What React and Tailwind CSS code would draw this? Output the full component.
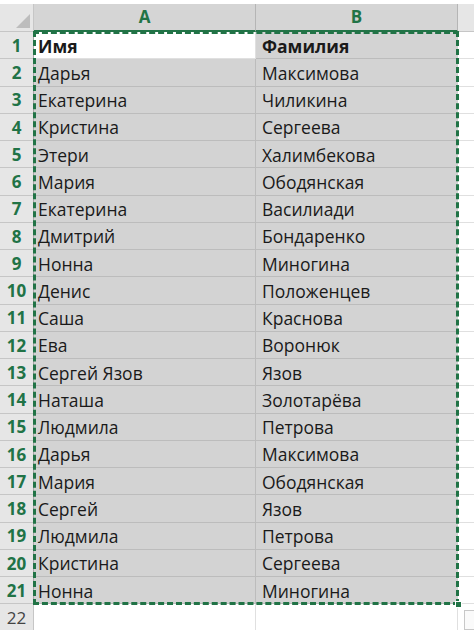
import React from "react";

const rows = [
  ["Имя", "Фамилия"],
  ["Дарья", "Максимова"],
  ["Екатерина", "Чиликина"],
  ["Кристина", "Сергеева"],
  ["Этери", "Халимбекова"],
  ["Мария", "Ободянская"],
  ["Екатерина", "Василиади"],
  ["Дмитрий", "Бондаренко"],
  ["Нонна", "Миногина"],
  ["Денис", "Положенцев"],
  ["Саша", "Краснова"],
  ["Ева", "Воронюк"],
  ["Сергей Язов", "Язов"],
  ["Наташа", "Золотарёва"],
  ["Людмила", "Петрова"],
  ["Дарья", "Максимова"],
  ["Мария", "Ободянская"],
  ["Сергей", "Язов"],
  ["Людмила", "Петрова"],
  ["Кристина", "Сергеева"],
  ["Нонна", "Миногина"],
];

const font = { fontFamily: '"Open Sans", "Liberation Sans", sans-serif' };

function RowNum({ n, active }) {
  return (
    <div
      className={`w-[34px] shrink-0 flex items-center justify-center border-b border-r border-[#c6c6c6] bg-[#e6e6e6] text-[17px] pt-[1px] ${
        active ? "font-bold text-[#217346] border-r-[#a8a8a8]" : "text-[#444]"
      }`}
    >
      {n}
    </div>
  );
}

export default function App() {
  return (
    <div className="w-[474px] h-[630px] overflow-hidden bg-white" style={font}>
      <div className="h-[4px]" />
      {/* column headers */}
      <div className="flex h-[28px]">
        <div className="w-[34px] shrink-0 relative bg-[#e6e6e6] border-r border-b border-[#c6c6c6]">
          <div className="absolute right-[3px] bottom-[3px] w-0 h-0 border-l-[14px] border-l-transparent border-b-[14px] border-b-[#bdbdbd]" />
        </div>
        <div className="w-[222px] shrink-0 flex items-center justify-center bg-[#d5d5d5] border-r border-[#b5b5b5] border-b-2 border-b-[#217346] text-[17px] font-bold text-[#217346]">
          A
        </div>
        <div className="w-[202px] shrink-0 flex items-center justify-center bg-[#d5d5d5] border-r border-[#b5b5b5] border-b-2 border-b-[#217346] text-[17px] font-bold text-[#217346]">
          B
        </div>
        <div className="flex-1 bg-[#e6e6e6] border-b border-[#c6c6c6]" />
      </div>

      <div className="flex">
        <div className="flex flex-col">
          {rows.map((_, i) => (
            <div key={i} className="h-[27.25px] flex">
              <RowNum n={i + 1} active />
            </div>
          ))}
          <div className="h-[27px] flex">
            <RowNum n={22} />
          </div>
        </div>

        <div className="flex flex-col">
          <div className="relative">
            {rows.map(([a, b], i) => (
              <div key={i} className="h-[27.25px] flex text-[17.5px] text-[#1a1a1a]">
                <div
                  className={`w-[222px] shrink-0 flex items-center pl-[4px] pt-[1px] border-b border-r ${
                    i === 0
                      ? "bg-white border-[#e0e0e0] font-bold"
                      : "bg-[#d3d3d3] border-[#bcbcbc]"
                  }`}
                >
                  {a}
                </div>
                <div
                  className={`w-[202px] shrink-0 flex items-center pl-[6px] pt-[1px] border-b border-[#bcbcbc] bg-[#d3d3d3] ${
                    i === 0 ? "font-bold" : ""
                  }`}
                >
                  {b}
                </div>
              </div>
            ))}
            {/* marching ants */}
            <div className="absolute -inset-[1px] border-[3px] border-dashed border-[#217346] pointer-events-none" />
            <div className="absolute -right-[4px] -bottom-[4px] w-[7px] h-[7px] bg-[#217346] border border-white" />
          </div>
          <div className="h-[27px] flex">
            <div className="w-[222px] shrink-0 border-b border-r border-[#e0e0e0]" />
            <div className="w-[202px] shrink-0 border-b border-r border-[#e0e0e0]" />
          </div>
        </div>
        <div className="flex-1 flex flex-col">
          {rows.map((_, i) => (
            <div key={i} className="h-[27.25px] border-b border-[#e0e0e0]" />
          ))}
          <div className="h-[27px] relative">
            <div className="absolute left-[6px] top-[6px] w-[14px] h-[20px] border border-[#c8c8c8] bg-[#fafafa]" />
          </div>
        </div>
      </div>
    </div>
  );
}
